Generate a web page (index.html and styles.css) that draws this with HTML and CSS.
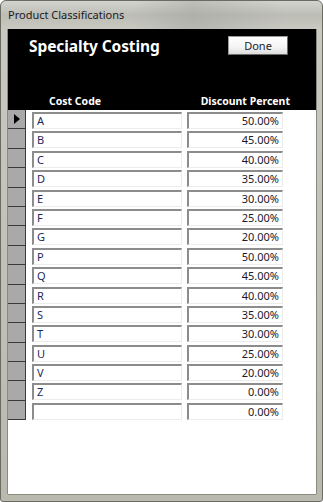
FILE: index.html
```html
<!DOCTYPE html>
<html>
<head>
<meta charset="utf-8">
<title>Product Classifications</title>
<link rel="stylesheet" href="styles.css">
</head>
<body>

<div class="window">
	<div class="titlebar">Product Classifications</div>
	<div class="client">
		<div class="header">
			<div class="top">
				<h1>Specialty Costing</h1>
				<div class="btn">Done</div>
			</div>
			<div class="cols">
				<span class="col1">Cost Code</span>
				<span class="col2">Discount Percent</span>
			</div>
		</div>
		<div class="grid">
			<div class="row"><div class="sel cur"></div><div class="fld">A</div><div class="fld num">50.00%</div></div>
			<div class="row"><div class="sel"></div><div class="fld">B</div><div class="fld num">45.00%</div></div>
			<div class="row"><div class="sel"></div><div class="fld">C</div><div class="fld num">40.00%</div></div>
			<div class="row"><div class="sel"></div><div class="fld">D</div><div class="fld num">35.00%</div></div>
			<div class="row"><div class="sel"></div><div class="fld">E</div><div class="fld num">30.00%</div></div>
			<div class="row"><div class="sel"></div><div class="fld">F</div><div class="fld num">25.00%</div></div>
			<div class="row"><div class="sel"></div><div class="fld">G</div><div class="fld num">20.00%</div></div>
			<div class="row"><div class="sel"></div><div class="fld">P</div><div class="fld num">50.00%</div></div>
			<div class="row"><div class="sel"></div><div class="fld">Q</div><div class="fld num">45.00%</div></div>
			<div class="row"><div class="sel"></div><div class="fld">R</div><div class="fld num">40.00%</div></div>
			<div class="row"><div class="sel"></div><div class="fld">S</div><div class="fld num">35.00%</div></div>
			<div class="row"><div class="sel"></div><div class="fld">T</div><div class="fld num">30.00%</div></div>
			<div class="row"><div class="sel"></div><div class="fld">U</div><div class="fld num">25.00%</div></div>
			<div class="row"><div class="sel"></div><div class="fld">V</div><div class="fld num">20.00%</div></div>
			<div class="row"><div class="sel"></div><div class="fld">Z</div><div class="fld num">0.00%</div></div>
			<div class="row"><div class="sel"></div><div class="fld"></div><div class="fld num">0.00%</div></div>
		</div>
	</div>
</div>

</body>
</html>
```

FILE: styles.css
```css
html, body {
	margin: 0px;
	padding: 0px;
}
body {
	width: 323px;
	height: 502px;
	overflow: hidden;
}
.window {
	box-sizing: border-box;
	width: 323px;
	height: 502px;
	display: flex;
	flex-direction: column;
	padding: 0px 6px 7px 7px;
	border: 1px solid #6b6b62;
	border-radius: 6px 6px 3px 3px;
	background: linear-gradient(to bottom, #d4d4d0 0px, #bdbdb6 14px, #c9c9c2 28px, #b9b9ae 100%);
	font-family: "Noto Sans", "Open Sans", sans-serif;
}
.titlebar {
	height: 28px;
	line-height: 28px;
	font-size: 11px;
	color: #1a1a1a;
	background: linear-gradient(to right, transparent 40%, rgba(150,150,150,0.35) 60%, transparent 90%);
}
.client {
	flex: 1;
	background: #fff;
	box-shadow: 1px 0px 0px #8a8a80, -1px 0px 0px #8a8a80, 0px 1px 0px #8a8a80;
	display: flex;
	flex-direction: column;
}
.header {
	background: #000;
	height: 81px;
	display: flex;
	flex-direction: column;
	justify-content: space-between;
	color: #fff;
}
.top {
	display: flex;
	align-items: flex-start;
	justify-content: space-between;
	padding: 6px 28px 0px 21px;
}
h1 {
	margin: 0px;
	font-size: 15.5px;
	font-weight: bold;
	letter-spacing: -0.1px;
	line-height: 22px;
}
.btn {
	margin-top: 1px;
	width: 58px;
	height: 17px;
	line-height: 17px;
	text-align: center;
	font-size: 11px;
	color: #222;
	background: linear-gradient(to bottom, #ffffff 0%, #f4f4f4 60%, #dcdcdc 100%);
	border: 1px solid #9a9a9a;
	border-right-color: #6a6a6a;
	border-bottom-color: #6a6a6a;
}
.cols {
	position: relative;
	height: 15px;
	font-size: 10.5px;
	font-weight: bold;
	line-height: 13px;
}
.col1 {
	margin-left: 41px;
}
.col2 {
	position: absolute;
	right: 26px;
	top: 0px;
}
.grid {
	display: flex;
	flex-direction: column;
}
.row {
	height: 19.4px;
	display: flex;
	align-items: flex-start;
}
.sel {
	box-sizing: border-box;
	width: 18px;
	height: 100%;
	background: #a9a9a9;
	border-right: 1px solid #3a3a3a;
	border-bottom: 1px solid #3a3a3a;
	position: relative;
}
.sel.cur::after {
	content: "";
	position: absolute;
	left: 6px;
	top: 4px;
	border-left: 6px solid #000;
	border-top: 5px solid transparent;
	border-bottom: 5px solid transparent;
}
.fld {
	box-sizing: border-box;
	margin-top: 2px;
	margin-left: 6px;
	width: 150px;
	height: 17px;
	line-height: 14px;
	padding: 0px 3px;
	font-size: 11px;
	color: #1c2a5a;
	background: #fff;
	border-top: 2px solid #8c8c8c;
	border-left: 2px solid #8c8c8c;
	border-right: 1px solid #ececec;
	border-bottom: 1px solid #ececec;
}
.fld.num {
	margin-left: 5px;
	width: 96px;
	text-align: right;
	color: #1a1a2a;
}
```
